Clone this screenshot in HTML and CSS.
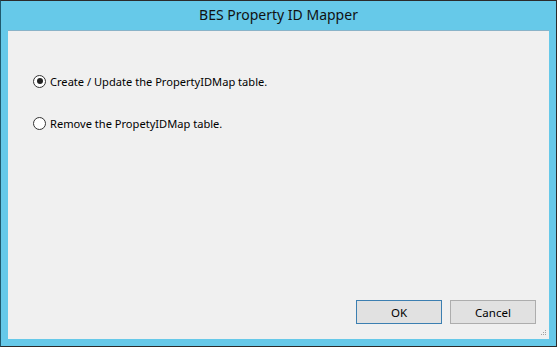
FILE: index.html
```html
<!DOCTYPE html>
<html lang="en">

<head>
  <meta charset="UTF-8" />
  <title>BES Property ID Mapper</title>
  <link rel="stylesheet" href="styles.css">
</head>

<body>

  <div class="window">
    <div class="title-bar">BES Property ID Mapper</div>

    <div class="client">
      <div class="options">
        <label class="radio-row">
          <span class="radio checked"></span>
          <span>Create / Update the PropertyIDMap table.</span>
        </label>
        <label class="radio-row">
          <span class="radio"></span>
          <span>Remove the PropetyIDMap table.</span>
        </label>
      </div>

      <div class="btn-row">
        <button class="btn btn-default">OK</button>
        <button class="btn">Cancel</button>
      </div>

      <!-- grip di pojok kanan bawah -->
      <div class="grip">
        <svg width="7" height="7" viewBox="0 0 7 7">
          <rect x="5" y="0" width="1" height="1" fill="#a0a0a0" />
          <rect x="3" y="2" width="1" height="1" fill="#a0a0a0" />
          <rect x="5" y="2" width="1" height="1" fill="#a0a0a0" />
          <rect x="1" y="4" width="1" height="1" fill="#a0a0a0" />
          <rect x="3" y="4" width="1" height="1" fill="#a0a0a0" />
          <rect x="5" y="4" width="1" height="1" fill="#a0a0a0" />
        </svg>
      </div>
    </div>
  </div>

</body>

</html>
```

FILE: styles.css
```css
body {
  margin: 0;
  font-family: 'Noto Sans', 'Open Sans', sans-serif;
}

.window {
  width: 557px;
  height: 347px;
  box-sizing: border-box;
  border: 1px solid #2b2b2b;
  border-left-color: #1f5a6e;
  background: #66c9e9;
  display: flex;
  flex-direction: column;
  padding: 0 7px 7px 7px;
}

.title-bar {
  height: 29px;
  line-height: 28px;
  text-align: center;
  font-size: 14px;
  color: #111;
}

.client {
  flex: 1;
  background: #f0f0f0;
  border-top: 1px solid #8ab3c8;
  position: relative;
  display: flex;
  flex-direction: column;
}

.options {
  padding: 40px 0 0 25px;
  display: flex;
  flex-direction: column;
  gap: 22px;
}

.radio-row {
  display: flex;
  align-items: center;
  gap: 4px;
  font-size: 11.1px;
  color: #000;
  height: 20px;
}

.radio {
  width: 11px;
  height: 11px;
  border: 1px solid #333;
  border-radius: 50%;
  background: white;
  display: flex;
  align-items: center;
  justify-content: center;
}

.radio.checked::after {
  content: "";
  width: 6px;
  height: 6px;
  border-radius: 50%;
  background: #222;
}

.btn-row {
  margin-top: auto;
  display: flex;
  justify-content: flex-end;
  gap: 8px;
  padding: 0 13px 15px 0;
}

.btn {
  width: 86px;
  height: 24px;
  background: #e1e1e1;
  border: 1px solid #adadad;
  font-family: 'Noto Sans', 'Open Sans', sans-serif;
  font-size: 11.5px;
  color: #000;
  padding: 0;
}

.btn-default {
  border-color: #3c7fb1;
}

.grip {
  position: absolute;
  right: 2px;
  bottom: 2px;
  line-height: 0;
}
```
